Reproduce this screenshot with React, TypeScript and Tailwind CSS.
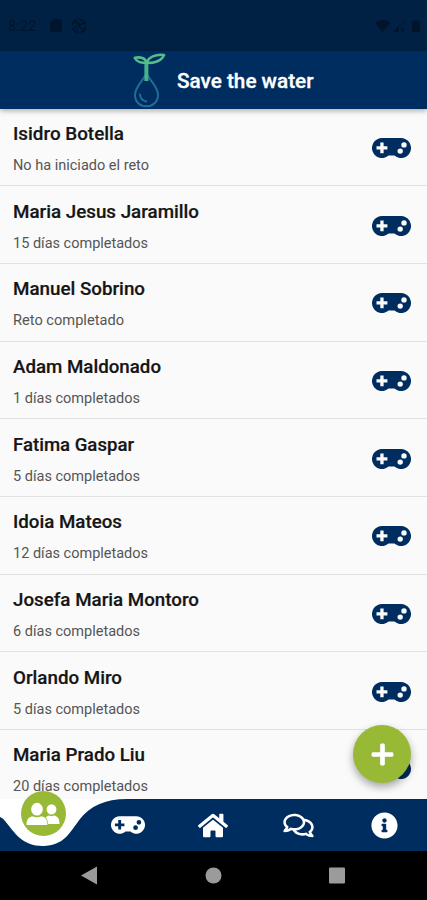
import { FaHome, FaInfoCircle, FaPlus, FaRegComments } from 'react-icons/fa';

const participants = [
  { name: 'Isidro Botella', status: 'No ha iniciado el reto', nameWidth: 111, statusWidth: 136 },
  { name: 'Maria Jesus Jaramillo', status: '15 días completados', nameWidth: 186, statusWidth: 135 },
  { name: 'Manuel Sobrino', status: 'Reto completado', nameWidth: 132, statusWidth: 111 },
  { name: 'Adam Maldonado', status: '1 días completados', nameWidth: 148, statusWidth: 127 },
  { name: 'Fatima Gaspar', status: '5 días completados', nameWidth: 121, statusWidth: 127 },
  { name: 'Idoia Mateos', status: '12 días completados', nameWidth: 109, statusWidth: 135 },
  { name: 'Josefa Maria Montoro', status: '6 días completados', nameWidth: 186, statusWidth: 127 },
  { name: 'Orlando Miro', status: '5 días completados', nameWidth: 109, statusWidth: 127 },
  { name: 'Maria Prado Liu', status: '20 días completados', nameWidth: 132, statusWidth: 135 },
];

function StatusBar() {
  return (
    <div className="h-[51px] shrink-0 bg-[#002143] flex items-center justify-between pl-[8px] pr-[7px] text-[#00142b]">
      <div className="flex items-center">
        <span className="w-[42px] text-[14px] leading-none tracking-[0.4px]">8:22</span>
        <svg width="12" height="13" viewBox="0 0 12 13" fill="currentColor">
          <path d="M4 0h7a1 1 0 0 1 1 1v11a1 1 0 0 1-1 1H1a1 1 0 0 1-1-1V4z" />
        </svg>
        <svg className="ml-[9px]" width="16" height="16" viewBox="0 0 16 16" fill="none" stroke="currentColor">
          <circle cx="8" cy="8" r="6.5" strokeWidth="2" strokeDasharray="8 2" />
          <path d="M4 4l8 8M6 3l3 4 4-2M4 8l3 4" strokeWidth="1.6" />
        </svg>
      </div>
      <div className="flex items-center">
        <svg width="15" height="12" viewBox="0 0 15 12" fill="currentColor">
          <path d="M0 2.8C4-.9 11-.9 15 2.8L7.5 12z" />
        </svg>
        <svg className="ml-[3px]" width="12" height="12" viewBox="0 0 12 12" fill="currentColor">
          <path d="M0 12L6 6v6z" />
          <path d="M6 6l6-6v4M8 8l3 4M11 8l-3 4" fill="none" stroke="currentColor" />
        </svg>
        <svg className="ml-[7px]" width="8" height="12" viewBox="0 0 8 12" fill="currentColor">
          <path d="M2.5 0h3v1H7a1 1 0 0 1 1 1v9a1 1 0 0 1-1 1H1a1 1 0 0 1-1-1V2a1 1 0 0 1 1-1h1.5z" />
        </svg>
      </div>
    </div>
  );
}

function Logo() {
  return (
    <svg width="34" height="56" viewBox="0 0 34 56" fill="none" strokeLinecap="round" strokeLinejoin="round">
      <path
        d="M14.4 21.5C11 29 3 34.5 3 43C3 50 8 54.3 14.4 54.3S26 50 26 43C26 34.5 18 29 14.4 21.5Z"
        stroke="#216f99"
        strokeWidth="1.9"
      />
      <path d="M8 42.5c.3 3.7 2.5 6.2 6.2 7" stroke="#216f99" strokeWidth="1.9" />
      <path d="M14.4 10v19" stroke="#45b38b" strokeWidth="4" strokeLinecap="butt" />
      <path
        d="M14.5 10.5C10 11.5 5 10 2.8 5.8C8 4.8 13 5.5 14.5 10.5ZM15 10.5C16 5.5 24 1.8 32 3C29.5 9 21 12 15 10.5Z"
        stroke="#54bd8b"
        strokeWidth="2.6"
      />
    </svg>
  );
}

function Header() {
  return (
    <header className="relative z-10 h-[58px] shrink-0 bg-[#002d5f] flex items-center pl-[132px] shadow-[0_2px_5px_rgba(0,0,0,0.3)]">
      <Logo />
      <svg className="ml-[11px]" width="140" height="28" fill="white">
        <text x="0" y="22" fontSize="20" fontWeight="500" stroke="white" strokeWidth="0.3" textLength="136.5" lengthAdjust="spacingAndGlyphs">
          Save the water
        </text>
      </svg>
    </header>
  );
}

function GamepadIcon({ className }: { className?: string }) {
  return (
    <svg className={className} viewBox="0 0 39 20" fill="currentColor">
      <path
        fillRule="evenodd"
        d="M10 0H29A10 10 0 1 1 22.4 17.5H16.6A10 10 0 1 1 10 0ZM8.3 4.4V8.2H4.5V11.5H8.3V15.3H11.6V11.5H15.4V8.2H11.6V4.4ZM28.2 10.4A2.7 2.7 0 1 0 28.2 15.8A2.7 2.7 0 1 0 28.2 10.4ZM32 4.2A2.7 2.7 0 1 0 32 9.6A2.7 2.7 0 1 0 32 4.2Z"
      />
    </svg>
  );
}

type Participant = (typeof participants)[number];

function ParticipantRow({ name, status, nameWidth, statusWidth }: Participant) {
  return (
    <li className="h-[77.7px] shrink-0 border-b border-[#e2e2e2] flex items-center justify-between pl-[13px] pr-[16.5px]">
      <svg width="220" height="68" className="shrink-0">
        <text x="0" y="26.7" fontSize="18" fontWeight="500" fill="#151515" stroke="#151515" strokeWidth="0.2" textLength={nameWidth} lengthAdjust="spacingAndGlyphs">
          {name}
        </text>
        <text x="0" y="57" fontSize="14" fill="#555" textLength={statusWidth} lengthAdjust="spacingAndGlyphs">
          {status}
        </text>
      </svg>
      <GamepadIcon className="mt-[2px] w-[39px] h-[20px] text-[#002d5f]" />
    </li>
  );
}

function PeopleIcon() {
  return (
    <svg width="34" height="24" viewBox="0 0 34 24" fill="white" overflow="visible">
      <ellipse cx="24.5" cy="7.4" rx="4.9" ry="5.2" />
      <path d="M19 15Q21 13.5 22 13.5Q24.5 14.8 27 13.5C31 14.2 32.5 17 32.5 22H20Z" />
      {/* Front figure, outlined so it stands clear of the one behind */}
      <g stroke="#98b936" strokeWidth="1.6" paintOrder="stroke">
        <path d="M-.4 23C-.6 18 1.3 15.3 5.5 14.3Q10 16 14.5 14.3C18.7 15.3 20.6 18 20.4 23Z" />
        <ellipse cx="10" cy="7.2" rx="5.8" ry="6.4" />
      </g>
    </svg>
  );
}

function TabBar() {
  return (
    <nav className="relative h-[52px] shrink-0 bg-[#002d5f] text-white">
      {/* Notch that cradles the active tab */}
      <svg className="absolute left-0 top-0" width="130" height="52" fill="white">
        <path d="M0 0H127C105 0 90 7 80 20C70 33 64 47 43 47C22 47 15 34 5 22Q3 19 0 18Z" />
      </svg>
      <button className="absolute left-[21px] -top-[8px] size-[45px] rounded-full bg-[#98b936] flex items-center justify-center">
        <PeopleIcon />
      </button>
      <div className="h-full grid grid-cols-5 items-center justify-items-center">
        <span />
        <GamepadIcon className="w-[34px] h-[18px]" />
        <FaHome className="w-[30px] h-[27px]" />
        <FaRegComments className="w-[31px] h-[27px]" />
        <FaInfoCircle className="size-[27px]" />
      </div>
    </nav>
  );
}

function SystemNav() {
  return (
    <div className="h-[49px] shrink-0 bg-black">
      <svg width="427" height="49" fill="#9b9b9b">
        <path d="M81 24.5L97 15.5V33.5Z" />
        <circle cx="213.5" cy="24.5" r="8" />
        <rect x="329" y="16.5" width="16" height="16" rx="1" />
      </svg>
    </div>
  );
}

export default function App() {
  return (
    <div className="w-[427px] h-[900px] overflow-hidden flex flex-col bg-[#fafafa] font-[Roboto,sans-serif]">
      <StatusBar />
      <Header />
      <main className="relative flex-1 min-h-0">
        <ul className="h-full overflow-hidden flex flex-col -mt-[0.5px]">
          {participants.map((participant) => (
            <ParticipantRow key={participant.name} {...participant} />
          ))}
        </ul>
        <button className="absolute right-[16px] bottom-[16px] size-[58px] rounded-full bg-[#98b936] text-white flex items-center justify-center shadow-[0_4px_8px_rgba(0,0,0,0.35)]">
          <FaPlus className="size-[25px]" />
        </button>
      </main>
      <TabBar />
      <SystemNav />
    </div>
  );
}
